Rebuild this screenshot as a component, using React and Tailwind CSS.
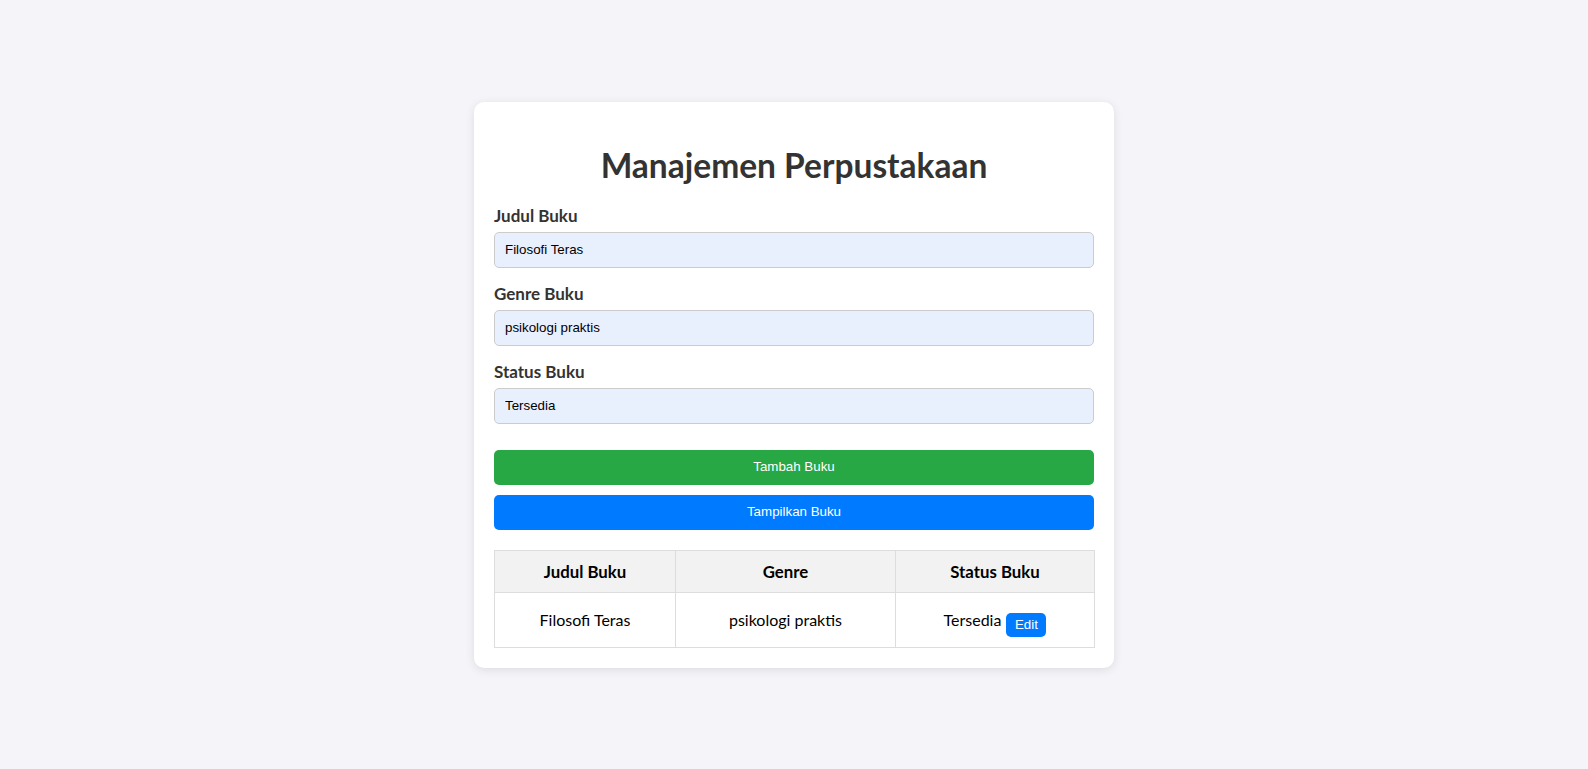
import React from "react";

function Field({ label, value }) {
  return (
    <div className="mb-[15px]">
      <label className="block text-[17px] leading-[22px] font-bold text-[#333] mb-[5px]">{label}</label>
      <input
        readOnly
        value={value}
        className="block w-full h-[36px] px-[10px] border border-[#cccccc] rounded-[5px] bg-[#e8f0fe] text-black text-[13.33px] font-['Liberation_Sans',Arial,sans-serif] outline-none"
      />
    </div>
  );
}

export default function App() {
  return (
    <div className="min-h-screen bg-[#f4f4f9] flex items-center justify-center font-['Lato',sans-serif]">
      <div className="w-[640px] bg-white rounded-[10px] shadow-[0_2px_10px_rgba(0,0,0,0.1)] p-[20px] flex flex-col">
        <h1 className="text-center text-[33.5px] leading-[43px] font-bold text-[#333] mt-[22px] mb-[18px]">
          Manajemen Perpustakaan
        </h1>
        <Field label="Judul Buku" value="Filosofi Teras" />
        <Field label="Genre Buku" value="psikologi praktis" />
        <Field label="Status Buku" value="Tersedia" />
        <button className="mt-[11px] block w-full h-[35px] rounded-[5px] bg-[#28a745] text-white text-[13.33px] font-['Liberation_Sans',Arial,sans-serif]">
          Tambah Buku
        </button>
        <button className="mt-[10px] block w-full h-[35px] rounded-[5px] bg-[#007bff] text-white text-[13.33px] font-['Liberation_Sans',Arial,sans-serif]">
          Tampilkan Buku
        </button>
        <table className="mt-[20px] w-full table-fixed border-separate border-spacing-0 border-l border-t border-[#ddd] text-black text-[16px]">
          <colgroup>
            <col className="w-[181px]" />
            <col className="w-[220px]" />
            <col className="w-[199px]" />
          </colgroup>
          <thead>
            <tr className="bg-[#f2f2f2]">
              <th className="border-r border-b border-[#ddd] py-[10px] text-[16.8px] leading-[21px] font-bold text-center">Judul Buku</th>
              <th className="border-r border-b border-[#ddd] py-[10px] text-[16.8px] leading-[21px] font-bold text-center">Genre</th>
              <th className="border-r border-b border-[#ddd] py-[10px] text-[16.8px] leading-[21px] font-bold text-center">Status Buku</th>
            </tr>
          </thead>
          <tbody>
            <tr>
              <td className="border-r border-b border-[#ddd] py-[10px] p-0">
                <div className="h-[34px] flex items-center justify-center leading-[22px]">Filosofi Teras</div>
              </td>
              <td className="border-r border-b border-[#ddd] py-[10px] p-0">
                <div className="h-[34px] flex items-center justify-center leading-[22px]">psikologi praktis</div>
              </td>
              <td className="border-r border-b border-[#ddd] py-[10px] p-0">
                <div className="h-[34px] flex items-center justify-center leading-[22px]">
                  <span>Tersedia</span>
                  <span className="self-end ml-[5px] w-[40px] h-[24px] rounded-[5px] bg-[#007bff] text-white text-[13.33px] leading-[24px] text-center font-['Liberation_Sans',Arial,sans-serif]">
                    Edit
                  </span>
                </div>
              </td>
            </tr>
          </tbody>
        </table>
      </div>
    </div>
  );
}
